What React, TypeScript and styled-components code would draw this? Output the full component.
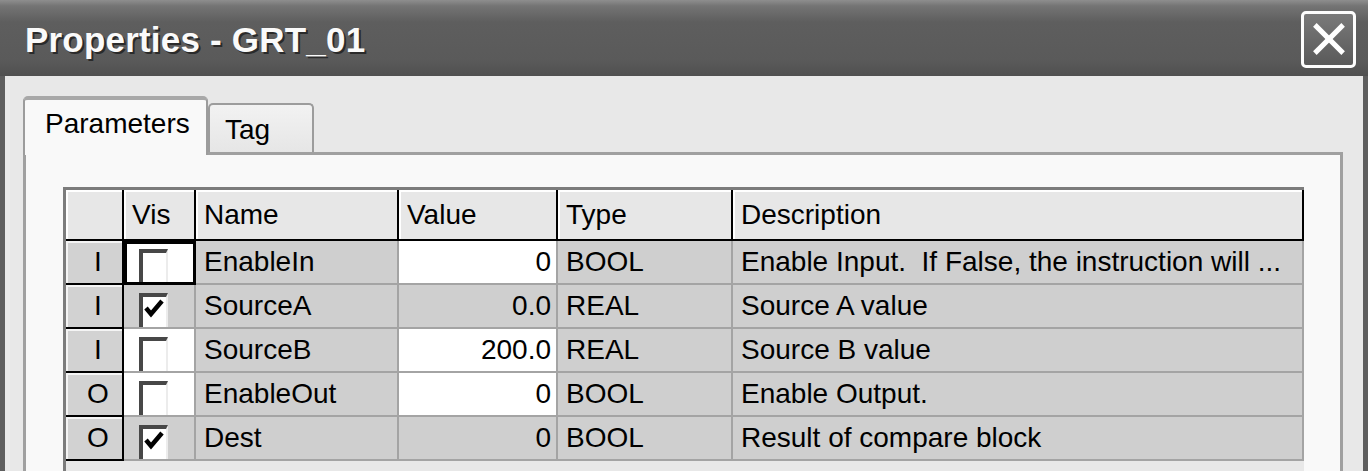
import React from 'react'
import styled, { createGlobalStyle, css } from 'styled-components'

const GlobalStyle = createGlobalStyle`
  html, body {
    margin: 0;
    padding: 0;
    background: #e8e8e8;
  }
  body {
    width: 1368px;
    height: 471px;
    overflow: hidden;
    font-family: 'Liberation Sans', Arial, sans-serif;
  }
`

const COLUMNS = [58, 72, 203, 159, 175, 571]
const template = COLUMNS.map((w) => `${w}px`).join(' ')

const Window = styled.div`
  display: flex;
  flex-direction: column;
  width: 1368px;
  height: 471px;
  overflow: hidden;
`

const TitleBar = styled.div`
  flex: 0 0 76px;
  display: flex;
  align-items: center;
  justify-content: space-between;
  padding: 0 12px 0 25px;
  box-sizing: border-box;
  background: linear-gradient(#8e8e8e 0, #747474 6px, #5e5e5e 22px, #5a5a5a 60px, #505050 76px);
`

const Title = styled.h1`
  margin: 4px 0 0;
  font-family: 'Liberation Sans', Arial, sans-serif;
  font-weight: bold;
  font-size: 35px;
  color: #fafafa;
  text-shadow: 2px 2px 0 #2a2a2a;
  letter-spacing: 0.2px;
`

const CloseButton = styled.button`
  position: relative;
  width: 55px;
  height: 57px;
  padding: 0;
  border: 3px solid #fdfdfd;
  border-radius: 5px;
  background: linear-gradient(#7a7a7a, #666 60%, #5a5a5a);
  box-sizing: border-box;
  margin-top: 2px;

  &::before,
  &::after {
    content: '';
    position: absolute;
    left: 50%;
    top: 50%;
    width: 40px;
    height: 5px;
    background: #fff;
    transform-origin: center;
  }
  &::before {
    transform: translate(-50%, -50%) rotate(45deg);
  }
  &::after {
    transform: translate(-50%, -50%) rotate(-45deg);
  }
`

const Body = styled.div`
  flex: 1;
  display: flex;
  flex-direction: column;
  background: #e8e8e8;
  border-left: 5px solid #5e5e5e;
  border-right: 5px solid #5e5e5e;
  padding: 0 20px 0 18px;
  min-height: 0;
`

const TabStrip = styled.div`
  flex: 0 0 76px;
  display: flex;
  align-items: flex-end;
  box-sizing: border-box;
`

const Tab = styled.div<{ $active?: boolean; $width: number }>`
  display: flex;
  align-items: center;
  width: ${(p) => p.$width}px;
  box-sizing: border-box;
  font-size: 28px;
  color: #000;
  border: 2px solid #9c9c9c;
  border-bottom: none;
  border-radius: 5px 5px 0 0;
  position: relative;
  ${(p) =>
    p.$active
      ? css`
          height: 59px;
          margin-bottom: -3px;
          padding: 0 0 8px 20px;
          background: #f9f9f9;
          border-top: 4px solid #a8a8a8;
          z-index: 1;
        `
      : css`
          height: 49px;
          padding: 2px 0 0 15px;
          background: linear-gradient(#f2f2f2, #e6e6e6);
        `}
`

const Panel = styled.div`
  flex: 1;
  display: flex;
  flex-direction: column;
  min-height: 0;
  background: #f9f9f9;
  border: 3px solid #a0a0a0;
  border-bottom: none;
  padding: 32px 0 0 37px;
  box-sizing: border-box;
`

const Grid = styled.div`
  flex: 1;
  width: ${COLUMNS.reduce((a, b) => a + b, 0) + 3}px;
  box-sizing: border-box;
  background: #e8e8e8;
  border-top: 3px solid #7c7c7c;
  border-left: 3px solid #7c7c7c;
`

const Row = styled.div`
  display: grid;
  grid-template-columns: ${template};
`

type Tone = 'header' | 'rowhead' | 'white' | 'gray' | 'focus'

const toneStyles: Record<Tone, ReturnType<typeof css>> = {
  header: css`
    height: 51px;
    background: #e7e7e7;
    border-right: 2px solid #000;
    border-bottom: 2px solid #000;
    box-shadow: inset 2px 2px 0 #fff;
  `,
  rowhead: css`
    height: 44px;
    background: #d2d2d2;
    border-right: 2px solid #000;
    border-bottom: 2px solid #000;
    box-shadow: inset 2px 2px 0 #f4f4f4;
    justify-content: center;
  `,
  white: css`
    height: 44px;
    background: #fff;
    border-right: 2px solid #a4a4a4;
    border-bottom: 2px solid #a4a4a4;
  `,
  gray: css`
    height: 44px;
    background: #cfcfcf;
    border-right: 2px solid #a4a4a4;
    border-bottom: 2px solid #a4a4a4;
  `,
  focus: css`
    height: 44px;
    background: #fff;
    border-right: 2px solid #a4a4a4;
    border-bottom: 2px solid #a4a4a4;
    &::after {
      content: '';
      position: absolute;
      inset: 0 -2px -2px 0;
      border: 3px solid #000;
      pointer-events: none;
    }
  `,
}

const Cell = styled.div<{ $tone: Tone; $right?: boolean }>`
  position: relative;
  display: flex;
  align-items: center;
  box-sizing: border-box;
  overflow: hidden;
  white-space: pre;
  font-size: 28px;
  line-height: 1;
  color: #000;
  padding: ${(p) => (p.$right ? '0 5px 0 0' : '0 0 0 8px')};
  justify-content: ${(p) => (p.$right ? 'flex-end' : 'flex-start')};
  ${(p) => toneStyles[p.$tone]}
`

const CheckCell = styled(Cell)`
  overflow: visible;
  align-items: flex-start;
  padding: 8px 0 0 15px;
`

const Box = styled.div`
  flex: 0 0 auto;
  width: 29px;
  height: 34px;
  margin-bottom: -2px;
  box-sizing: border-box;
  background: #fff;
  border-top: 4px solid #474747;
  border-left: 4px solid #474747;
  border-right: 2px solid #ececec;
  display: flex;
  align-items: flex-start;
  justify-content: center;
`

const CheckClip = styled.div`
  height: 34px;
  overflow: hidden;
`

const Checkbox: React.FC<{ checked: boolean }> = ({ checked }) => (
  <CheckClip>
    <Box>
      {checked && (
        <svg width='22' height='24' viewBox='0 0 22 24'>
          <polyline points='2,11 7,17 18,4' fill='none' stroke='#000' strokeWidth='4.5' />
        </svg>
      )}
    </Box>
  </CheckClip>
)

interface IParam {
  io: string
  vis: boolean
  name: string
  value: string
  type: string
  description: string
  editable: boolean
}

const params: IParam[] = [
  {
    io: 'I',
    vis: false,
    name: 'EnableIn',
    value: '0',
    type: 'BOOL',
    description: 'Enable Input.  If False, the instruction will ...',
    editable: true,
  },
  { io: 'I', vis: true, name: 'SourceA', value: '0.0', type: 'REAL', description: 'Source A value', editable: false },
  { io: 'I', vis: false, name: 'SourceB', value: '200.0', type: 'REAL', description: 'Source B value', editable: true },
  { io: 'O', vis: false, name: 'EnableOut', value: '0', type: 'BOOL', description: 'Enable Output.', editable: true },
  { io: 'O', vis: true, name: 'Dest', value: '0', type: 'BOOL', description: 'Result of compare block', editable: false },
]

const headers = ['', 'Vis', 'Name', 'Value', 'Type', 'Description']

export default function App() {
  return (
    <Window>
      <GlobalStyle />
      <TitleBar>
        <Title>Properties - GRT_01</Title>
        <CloseButton aria-label='Close' />
      </TitleBar>
      <Body>
        <TabStrip>
          <Tab $active $width={185}>
            Parameters
          </Tab>
          <Tab $width={106}>Tag</Tab>
        </TabStrip>
        <Panel>
          <Grid>
            <Row>
              {headers.map((h, i) => (
                <Cell key={i} $tone='header'>
                  {h}
                </Cell>
              ))}
            </Row>
            {params.map((p, i) => {
              const tone: Tone = p.editable ? 'white' : 'gray'
              return (
                <Row key={p.name}>
                  <Cell $tone='rowhead'>{p.io}</Cell>
                  <CheckCell $tone={i === 0 ? 'focus' : tone}>
                    <Checkbox checked={p.vis} />
                  </CheckCell>
                  <Cell $tone='gray'>{p.name}</Cell>
                  <Cell $tone={tone} $right>
                    {p.value}
                  </Cell>
                  <Cell $tone='gray'>{p.type}</Cell>
                  <Cell $tone='gray'>{p.description}</Cell>
                </Row>
              )
            })}
          </Grid>
        </Panel>
      </Body>
    </Window>
  )
}
